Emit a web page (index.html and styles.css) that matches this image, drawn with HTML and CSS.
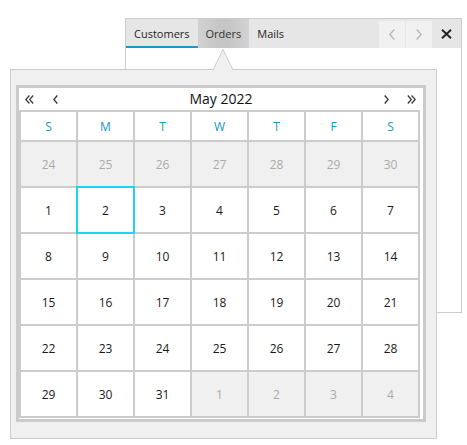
FILE: index.html
```html
<!DOCTYPE html>
<html>
<head>
<meta charset="utf-8">
<link rel="stylesheet" href="styles.css">
</head>
<body>
<div class="stage">
  <div class="tabwin">
    <div class="tabbar">
      <div class="tab active">Customers</div>
      <div class="tab hover">Orders</div>
      <div class="tab">Mails</div>
      <div class="spacer"></div>
      <div class="navbtn"><svg width="6" height="11" viewBox="0 0 6 11"><polyline points="5.3,0.5 0.8,5.5 5.3,10.5" fill="none" stroke="#b3b3b3" stroke-width="1.2"/></svg></div>
      <div class="navbtn"><svg width="6" height="11" viewBox="0 0 6 11"><polyline points="0.7,0.5 5.2,5.5 0.7,10.5" fill="none" stroke="#b3b3b3" stroke-width="1.2"/></svg></div>
      <div class="closebtn"><svg width="11" height="10" viewBox="0 0 11 10"><path d="M1 0.8 L10 9.2 M10 0.8 L1 9.2" fill="none" stroke="#222" stroke-width="2"/></svg></div>
    </div>
    <div class="tabbody"></div>
  </div>

  <div class="popup">
    <svg class="notch" width="22" height="21" viewBox="0 0 22 21"><polygon points="1,21 11,0.5 21,21" fill="#f0f0f0"/><polyline points="1,21 11,0.5 21,21" fill="none" stroke="#cccccc" stroke-width="1"/></svg>
    <div class="calendar">
      <div class="calhead">
        <span class="cnav first"><svg width="9" height="9" viewBox="0 0 9 9"><polyline points="4.4,0.5 0.8,4.5 4.4,8.5" fill="none" stroke="#333" stroke-width="1.2"/><polyline points="8.2,0.5 4.6,4.5 8.2,8.5" fill="none" stroke="#333" stroke-width="1.2"/></svg></span>
        <span class="cnav prev"><svg width="5" height="9" viewBox="0 0 5 9"><polyline points="4.3,0.5 0.8,4.5 4.3,8.5" fill="none" stroke="#333" stroke-width="1.3"/></svg></span>
        <span class="title">May 2022</span>
        <span class="cnav next"><svg width="5" height="9" viewBox="0 0 5 9"><polyline points="0.7,0.5 4.2,4.5 0.7,8.5" fill="none" stroke="#333" stroke-width="1.3"/></svg></span>
        <span class="cnav last"><svg width="9" height="9" viewBox="0 0 9 9"><polyline points="0.8,0.5 4.4,4.5 0.8,8.5" fill="none" stroke="#333" stroke-width="1.2"/><polyline points="4.6,0.5 8.2,4.5 4.6,8.5" fill="none" stroke="#333" stroke-width="1.2"/></svg></span>
      </div>
      <div class="grid">
        <div class="dn">S</div><div class="dn">M</div><div class="dn">T</div><div class="dn">W</div><div class="dn">T</div><div class="dn">F</div><div class="dn">S</div>
        <div class="d other">24</div><div class="d other">25</div><div class="d other">26</div><div class="d other">27</div><div class="d other">28</div><div class="d other">29</div><div class="d other">30</div>
        <div class="d">1</div><div class="d sel">2</div><div class="d">3</div><div class="d">4</div><div class="d">5</div><div class="d">6</div><div class="d">7</div>
        <div class="d">8</div><div class="d">9</div><div class="d">10</div><div class="d">11</div><div class="d">12</div><div class="d">13</div><div class="d">14</div>
        <div class="d">15</div><div class="d">16</div><div class="d">17</div><div class="d">18</div><div class="d">19</div><div class="d">20</div><div class="d">21</div>
        <div class="d">22</div><div class="d">23</div><div class="d">24</div><div class="d">25</div><div class="d">26</div><div class="d">27</div><div class="d">28</div>
        <div class="d">29</div><div class="d">30</div><div class="d">31</div><div class="d other">1</div><div class="d other">2</div><div class="d other">3</div><div class="d other">4</div>
      </div>
    </div>
  </div>
</div>
</body>
</html>
```

FILE: styles.css
```css
html, body {
  margin: 0;
  padding: 0;
  background: #ffffff;
}

body {
  font-family: "Open Sans", "Noto Sans", sans-serif;
  color: #222222;
}

.stage {
  position: relative;
  width: 467px;
  height: 445px;
  padding: 18px 0 0 125px;
  box-sizing: border-box;
  overflow: hidden;
}

.tabwin {
  width: 337px;
  height: 295px;
  box-sizing: border-box;
  border: 1px solid #cccccc;
  background: #ffffff;
  display: flex;
  flex-direction: column;
}

.tabbar {
  height: 29px;
  background: #e6e6e6;
  display: flex;
  align-items: stretch;
}

.tab {
  padding: 0 8px;
  font-size: 11px;
  line-height: 29px;
  color: #1e1e1e;
}

.tab.active {
  box-shadow: inset 0 -2px 0 #1a9bc6;
}

.tab.hover {
  background: linear-gradient(to right, #d2d2d2, #c6c6c6 40%, #c6c6c6 60%, #d2d2d2);
  color: #333333;
}

.spacer {
  flex: 1;
}

.navbtn {
  width: 26px;
  margin-top: 2px;
  margin-left: 1px;
  background: #f1f1f1;
  display: flex;
  align-items: center;
  justify-content: center;
}

.closebtn {
  width: 29px;
  display: flex;
  align-items: center;
  justify-content: center;
}

.tabbody {
  flex: 1;
}

.popup {
  position: absolute;
  left: 10px;
  top: 69px;
  width: 427px;
  height: 370px;
  box-sizing: border-box;
  border: 1px solid #cccccc;
  background: #f0f0f0;
  padding: 15px 0 0 5px;
}

.notch {
  position: absolute;
  left: 201px;
  top: -21px;
  display: block;
}

.calendar {
  width: 410px;
  height: 337px;
  box-sizing: border-box;
  border: 3px solid #cbcbcb;
  background: #ffffff;
}

.calhead {
  height: 22px;
  display: flex;
  align-items: center;
  position: relative;
}

.cnav {
  display: flex;
  align-items: center;
}

.cnav svg {
  display: block;
}

.cnav.first {
  margin-left: 6px;
}

.cnav.prev {
  margin-left: 19px;
}

.title {
  flex: 1;
  text-align: center;
  font-size: 14px;
  color: #111111;
  line-height: 22px;
}

.cnav.next {
  margin-right: 18px;
}

.cnav.last {
  margin-right: 7px;
}

.grid {
  width: 401px;
  box-sizing: border-box;
  background: #cccccc;
  padding: 2px;
  display: grid;
  grid-template-columns: repeat(7, 55px);
  grid-template-rows: 28px repeat(6, 44px);
  gap: 2px;
}

.dn {
  background: #ffffff;
  color: #1996c8;
  font-size: 12px;
  display: flex;
  align-items: center;
  justify-content: center;
}

.d {
  background: #ffffff;
  color: #1a1a1a;
  font-size: 12px;
  display: flex;
  align-items: center;
  justify-content: center;
}

.d.other {
  background: #f0f0f0;
  color: #aaaaaa;
}

.d.sel {
  position: relative;
  z-index: 1;
  outline: 2px solid #1fd3f6;
}
```
